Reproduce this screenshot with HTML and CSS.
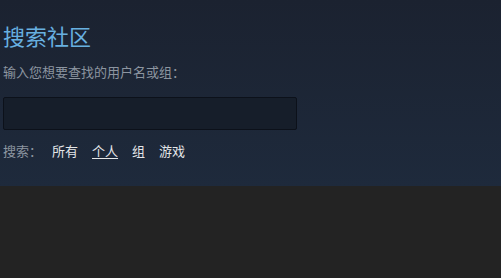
FILE: index.html
```html
<!DOCTYPE html>
<html lang="zh-CN">
<head>
<meta charset="utf-8">
<title>搜索社区</title>
<link rel="stylesheet" href="styles.css">
</head>
<body>
<div class="panel">
  <h1 class="title">搜索社区</h1>
  <p class="hint">输入您想要查找的用户名或组：</p>
  <div class="search-box"></div>
  <div class="filters">
    <span class="label">搜索：</span>
    <span class="opt">所有</span>
    <span class="opt active">个人</span>
    <span class="opt">组</span>
    <span class="opt">游戏</span>
  </div>
</div>
<div class="footer"></div>
</body>
</html>
```

FILE: styles.css
```css
html, body {
  margin: 0;
  padding: 0;
  height: 100%;
}
body {
  background: #232323;
  font-family: "Noto Sans CJK SC", "Liberation Sans", sans-serif;
  display: flex;
  flex-direction: column;
}
.panel {
  height: 186px;
  box-sizing: border-box;
  padding: 22px 0 0 3px;
  background: linear-gradient(to bottom, #1b2230 0%, #1e2a3c 100%);
}
.title {
  margin: 0;
  font-size: 22px;
  line-height: 26px;
  font-weight: normal;
  color: #68b0e0;
}
.hint {
  margin: 16px 0 0 0;
  font-size: 13px;
  line-height: 16px;
  color: #8c95a0;
}
.search-box {
  margin-top: 17px;
  width: 294px;
  height: 33px;
  box-sizing: border-box;
  border: 1px solid #0c111a;
  border-radius: 2px;
  background: #161e2a;
}
.filters {
  margin-top: 12px;
  display: flex;
  font-size: 13px;
  line-height: 18px;
}
.label {
  color: #8c95a0;
  margin-right: 10px;
}
.opt {
  color: #e4e6e8;
  margin-right: 14px;
}
.active {
  text-decoration: underline;
  text-underline-offset: 2px;
}
.footer {
  flex: 1;
  background: #232323;
}
```
